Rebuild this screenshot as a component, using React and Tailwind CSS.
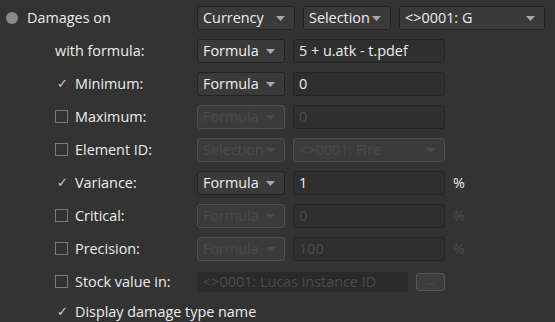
import React from 'react';

const font = { fontFamily: '"Open Sans", "Noto Sans", sans-serif' };

function Arrow({ disabled }) {
  return (
    <svg width="9" height="5" viewBox="0 0 9 5" className="shrink-0">
      <path d="M0 0 L9 0 L4.5 5 Z" fill={disabled ? '#4c4c4c' : '#a8a8a8'} />
    </svg>
  );
}

function Combo({ label, w, disabled }) {
  return (
    <div
      className={
        'flex h-6 items-center justify-between rounded-[3px] border pl-[5px] pr-[9px] ' +
        (disabled
          ? 'border-[#4e4e4e] bg-[#3b3b3b] text-[#4a4a4a]'
          : 'border-[#222222] bg-[#3a3a3a] text-[#eeeeee]')
      }
      style={{ width: w }}
    >
      <span className="truncate">{label}</span>
      <Arrow disabled={disabled} />
    </div>
  );
}

function Input({ value, disabled, w = 152 }) {
  return (
    <div
      className={
        'flex h-6 items-center rounded-[3px] border border-[#242424] bg-[#2f2f2f] px-[5px] ' +
        (disabled ? 'text-[#4c4c4c]' : 'text-[#eeeeee]')
      }
      style={{ width: w }}
    >
      {value}
    </div>
  );
}

function Check({ checked }) {
  if (checked) {
    return <span className="flex w-5 justify-start pl-[2px] text-[13px] text-[#cfcfcf]">✓</span>;
  }
  return (
    <span className="mr-[7px] inline-block h-[13px] w-[13px] border border-[#7a7a7a]" />
  );
}

function Row({ check, label, children }) {
  return (
    <div className="flex h-6 items-center">
      <div className="flex w-[197px] items-center pl-[55px]">
        {check !== undefined && <Check checked={check} />}
        <span>{label}</span>
      </div>
      <div className="flex items-center gap-2">{children}</div>
    </div>
  );
}

function Pct({ disabled }) {
  return <span className={disabled ? 'text-[#4c4c4c]' : 'text-[#eeeeee]'}>%</span>;
}

export default function App() {
  return (
    <div
      className="flex h-[322px] w-[555px] flex-col gap-[9px] overflow-hidden bg-[#333333] pt-[6px] text-[14.4px] text-[#eeeeee]"
      style={font}
    >
      <div className="flex h-6 items-center">
        <div className="flex w-[197px] items-center pl-[6px]">
          <span className="mr-[9px] inline-block h-3 w-3 rounded-full bg-[#8a8a8a]" />
          <span>Damages on</span>
        </div>
        <div className="flex items-center gap-2">
          <Combo label="Currency" w={98} />
          <Combo label="Selection" w={88} />
          <Combo label="<>0001: G" w={146} />
        </div>
      </div>

      <Row label="with formula:">
        <Combo label="Formula" w={88} />
        <Input value="5 + u.atk - t.pdef" />
      </Row>

      <Row check label="Minimum:">
        <Combo label="Formula" w={88} />
        <Input value="0" />
      </Row>

      <Row check={false} label="Maximum:">
        <Combo label="Formula" w={88} disabled />
        <Input value="0" disabled />
      </Row>

      <Row check={false} label="Element ID:">
        <Combo label="Selection" w={88} disabled />
        <Combo label="<>0001: Fire" w={152} disabled />
      </Row>

      <Row check label="Variance:">
        <Combo label="Formula" w={88} />
        <Input value="1" />
        <Pct />
      </Row>

      <Row check={false} label="Critical:">
        <Combo label="Formula" w={88} disabled />
        <Input value="0" disabled />
        <Pct disabled />
      </Row>

      <Row check={false} label="Precision:">
        <Combo label="Formula" w={88} disabled />
        <Input value="100" disabled />
        <Pct disabled />
      </Row>

      <Row check={false} label="Stock value in:">
        <div className="flex h-5 w-[211px] items-center border border-[#2a2a2a] bg-[#2a2a2a] px-[5px] text-[#4c4c4c]">
          &lt;&gt;0001: Lucas instance ID
        </div>
        <div className="flex h-[18px] w-[29px] items-center justify-center rounded-[3px] border border-[#555555] bg-[#3d3d3d] text-[10px] text-[#555555]">
          ...
        </div>
      </Row>

      <div className="flex h-5 items-center pl-[55px]">
        <Check checked />
        <span>Display damage type name</span>
      </div>
    </div>
  );
}
